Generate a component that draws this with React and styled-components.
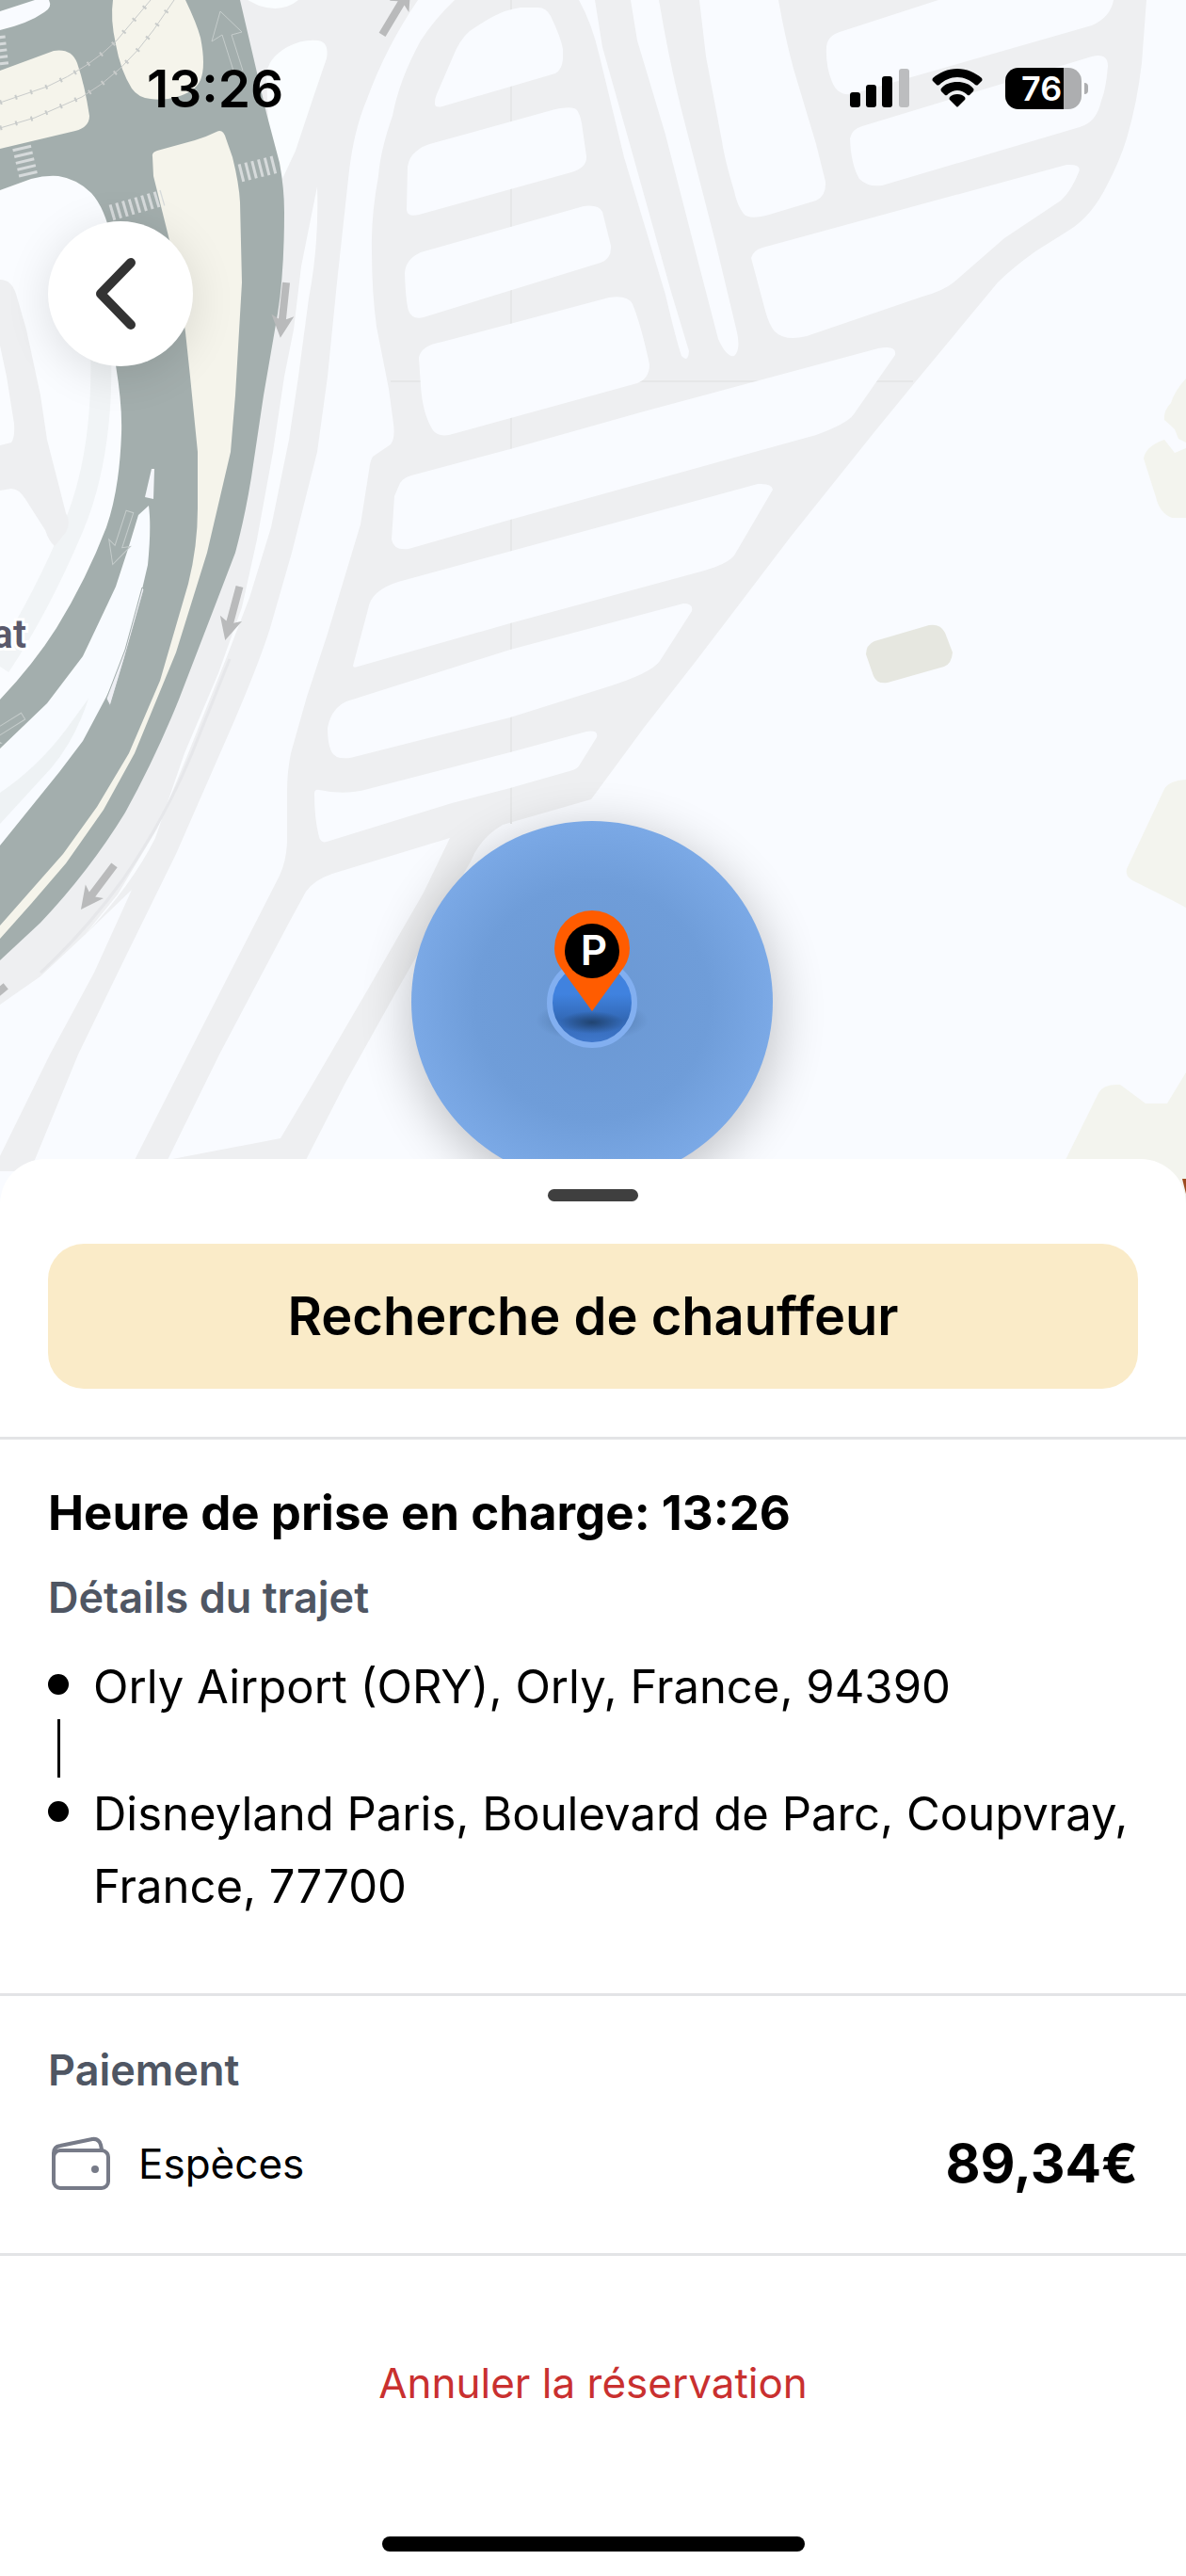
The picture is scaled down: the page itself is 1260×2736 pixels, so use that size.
import React from 'react'
import styled, { createGlobalStyle } from 'styled-components'

const GlobalStyle = createGlobalStyle`
  *, *::before, *::after {
    box-sizing: border-box;
  }

  body {
    margin: 0;
    background: #ffffff;
    color: #000000;
    font-family: Inter, Roboto, 'Liberation Sans', sans-serif;
  }
`

const Screen = styled.main`
  position: relative;
  display: flex;
  flex-direction: column;
  min-height: 100vh;
`

const MapView = styled.svg`
  display: block;
  width: 100%;
  height: auto;
  background: #f9fbff;
`

const Overlay = styled.header`
  position: absolute;
  top: 0;
  left: 0;
  right: 0;
`

const StatusBar = styled.div`
  display: flex;
  align-items: center;
  justify-content: space-between;
  height: 188px;
  padding: 0 104px 0 156px;
`

const Clock = styled.time`
  font-size: 55px;
  font-weight: 600;
  line-height: 64px;
`

const StatusIcons = styled.div`
  display: flex;
  align-items: center;
  gap: 24px;
`

const Battery = styled.div`
  display: flex;
  align-items: center;
  gap: 3px;
`

const BatteryLevel = styled.span`
  width: 81px;
  height: 44px;
  padding-left: 17px;
  border-radius: 14px;
  background: linear-gradient(to right, #000000 76%, #adaeb0 76%);
  color: #ffffff;
  font-size: 36px;
  font-weight: 600;
  line-height: 44px;
`

const BatteryTip = styled.span`
  width: 4px;
  height: 12px;
  border-radius: 0 4px 4px 0;
  background: #adaeb0;
`

const BackButton = styled.button`
  display: flex;
  align-items: center;
  justify-content: center;
  width: 154px;
  height: 154px;
  margin: 47px 0 0 51px;
  padding: 0;
  border: 0;
  border-radius: 50%;
  background: #ffffff;
  box-shadow: 0 8px 48px rgba(0, 0, 0, 0.12);
  cursor: pointer;
`

const Sheet = styled.section`
  position: relative;
  display: flex;
  flex: 1;
  flex-direction: column;
  margin-top: -48px;
  border-radius: 48px 48px 0 0;
  background: #ffffff;
`

const Handle = styled.span`
  align-self: center;
  width: 96px;
  height: 13px;
  margin: 32px 0 45px;
  border-radius: 8px;
  background: #3f3f3f;
`

const Block = styled.div`
  display: flex;
  flex-direction: column;
  padding: ${(props) => props.$padding};
  border-bottom: 3px solid #e3e4e6;
`

const SearchStatus = styled.p`
  margin: 0;
  padding: 44px;
  border-radius: 38px;
  background: #faebc8;
  font-size: 56px;
  font-weight: 600;
  line-height: 66px;
  text-align: center;
`

const Title = styled.h1`
  margin: 0 0 30px;
  font-size: 51px;
  font-weight: 700;
  line-height: 64px;
`

const Label = styled.h2`
  margin: 0;
  color: #4f5663;
  font-size: 45px;
  font-weight: 600;
  line-height: 56px;
`

const Stops = styled.ul`
  display: flex;
  flex-direction: column;
  margin: 28px 0 0;
  padding: 0;
  list-style: none;
`

const Stop = styled.li`
  display: grid;
  grid-template-columns: 22px 1fr;
  column-gap: 26px;
`

const StopMark = styled.span`
  display: flex;
  flex-direction: column;
  align-items: center;
  gap: 26px;
  padding-top: 25px;

  &::before {
    width: 22px;
    height: 22px;
    border-radius: 50%;
    background: #000000;
    content: '';
  }
`

const StopLine = styled.span`
  width: 3px;
  height: 62px;
  background: #000000;
`

const Address = styled.span`
  font-size: 49px;
  line-height: 77px;
`

const PaymentRow = styled.div`
  display: flex;
  align-items: center;
  gap: 28px;
  margin-top: 36px;
`

const Method = styled.span`
  flex: 1;
  font-size: 44px;
  line-height: 70px;
`

const Price = styled.strong`
  font-size: 57px;
  font-weight: 700;
  line-height: 70px;
`

const CancelButton = styled.button`
  align-self: center;
  margin: 105px 0 0;
  padding: 0;
  border: 0;
  background: none;
  color: #c9302f;
  font-family: inherit;
  font-size: 44px;
  line-height: 60px;
  cursor: pointer;
`

const HomeIndicator = styled.span`
  align-self: center;
  width: 449px;
  height: 16px;
  margin: auto 0 26px;
  border-radius: 8px;
  background: #000000;
`

// Lanes between the parking rows; the rows are drawn over it.
const parkingOutline =
  'M483 0Q462 20 447 43Q424 85 417 123Q404 160 402 187Q394 230 395 267Q395 310 400 347L413 413L418 450Q420 466 415 472L396 485Q393 490 392 500L383 557L348 673L326 740L309 800Q305 820 305 840V895Q304 915 297 930L200 1120L143 1232H178L298 1209L333 1150L393 1047L420 1000L450 948L478 890L353 928Q333 935 325 947L307 980L233 1120L178 1232H325L367 1150L420 1055L500 915Q510 890 534 876L628 849L684 773L741 700L840 570L928 460L973 405L1060 300Q1075 285 1100 267L1135 245Q1160 230 1177 195Q1190 170 1197 147Q1208 110 1213 67L1218 0Z'

const parkingRows = [
  'M462 110Q462 104 464 100L480 63Q488 42 499 33Q512 24 523 18Q538 10 553 8H572Q580 8 585 17Q596 40 598 52V63Q597 74 590 78L470 113Q462 115 462 110Z',
  'M432 223L433 177Q435 166 442 161Q448 155 460 152L590 116Q609 112 613 117Q616 121 618 131L623 166Q624 178 607 183L445 228Q433 231 432 223Z',
  'M430 290Q431 275 447 268L620 219Q636 217 640 225L649 261Q650 275 638 279L450 337Q438 340 434 330Q431 320 430 290Z',
  'M445 380Q447 367 470 363L647 316Q667 313 672 323Q681 345 690 387Q690 402 677 407L477 462Q465 464 460 457Q449 440 447 410Z',
  'M615 0H632L640 50L673 167L713 310L732 373Q731 386 724 378Q718 360 707 313L663 167L637 60Q629 25 615 0Z',
  'M670 0H700Q710 60 723 113L760 257L783 353Q787 372 780 378Q772 380 763 360L743 283L707 143L677 43Z',
  'M743 0H827Q834 40 843 73L867 153L877 193Q878 208 867 213L817 228Q796 234 790 227Q783 218 780 203Q770 170 767 150L750 60Z',
  'M997 0H1183Q1180 18 1160 27L905 100Q890 102 884 87Q877 70 878 50Q879 38 892 34Z',
  'M903 147Q905 137 916 134L1160 60Q1177 56 1177 70Q1175 95 1170 107Q1165 130 1147 135L937 197Q922 199 913 190Q904 175 903 147Z',
  'M798 274Q800 266 810 263L1133 175Q1150 174 1146 183Q1138 203 1127 213L1067 253L1013 300Q1002 309 980 315L857 357Q834 363 823 352Q817 345 813 330Z',
  'M425 513Q429 507 437 505L542 477L684 437L933 370Q953 366 951 377L930 407L907 440Q900 450 867 462L542 552L434 583Q418 585 416 573L419 527Z',
  'M375 707L391 647Q394 627 423 618L805 514Q820 513 821 520L780 590Q772 600 741 608L542 662L380 708Q375 710 375 707Z',
  'M348 773Q352 752 368 745L542 690L726 641Q737 641 735 649L701 702Q692 715 644 730L542 762L372 805Q356 807 352 798Q348 790 348 773Z',
  'M334 843Q334 838 339 839Q366 845 391 838L542 799L623 777Q636 775 634 783L616 812Q614 817 605 819L542 837L480 853L347 894Q341 896 339 889Q334 870 334 843Z',
]

const greenery = [
  'M1260 402Q1248 415 1244 428Q1236 436 1237 446Q1242 450 1248 456L1252 466L1260 470Z',
  'M1215 487Q1217 474 1237 467L1248 481L1260 476V550H1245Q1232 545 1228 528Z',
  'M1197 923L1237 838Q1242 829 1260 828V964L1245 956L1203 935Q1195 930 1197 923Z',
  'M1130 1236L1167 1161Q1172 1151 1190 1152L1217 1172H1240L1260 1139V1279H1130Z',
]

const DirectionArrow = ({ x, y, angle, outline }) => (
  <path
    d="M-4 -29H4V10L12 6L0 30L-12 6L-4 10Z"
    transform={`translate(${x} ${y}) rotate(${angle})`}
    fill={outline ? 'none' : '#b9babb'}
    stroke={outline ? '#c5cccb' : 'none'}
    strokeWidth="1"
  />
)

const Crossing = ({ d, width }) => (
  <path d={d} fill="none" stroke="#d6dadb" strokeWidth={width} strokeDasharray="3 4" />
)

const Track = ({ d }) => (
  <g fill="none" stroke="#c8cbca">
    <path d={d} strokeWidth="1" />
    <path d={d} strokeWidth="5" strokeDasharray="2 15" />
  </g>
)

const PickupMap = () => (
  <MapView viewBox="0 0 1260 1279" role="img" aria-label="Plan du point de prise en charge">
    <defs>
      <radialGradient id="zone">
        <stop offset="0" stopColor="#6b98d3" />
        <stop offset="0.65" stopColor="#6f9dd9" />
        <stop offset="1" stopColor="#7ba9e6" />
      </radialGradient>
      <linearGradient id="dot" x1="0" y1="0" x2="0" y2="1">
        <stop offset="0.4" stopColor="#4082df" />
        <stop offset="0.7" stopColor="#3268b5" />
        <stop offset="1" stopColor="#4179ce" />
      </linearGradient>
      <radialGradient id="pinShadow">
        <stop offset="0" stopColor="#1c3a5f" stopOpacity="0.8" />
        <stop offset="1" stopColor="#1c3a5f" stopOpacity="0" />
      </radialGradient>
      <filter id="soft" x="-30%" y="-30%" width="160%" height="160%">
        <feGaussianBlur stdDeviation="26" />
      </filter>
    </defs>

    <rect width="1260" height="1279" fill="#f9fbff" />

    {/* service road on the right of the ramps */}
    <path
      d="M250 0H444Q410 50 390 105Q375 140 370 190L358 300L348 400L337 480L310 587L287 667Q275 705 247 770L187 907L133 1017L83 1120L32 1244H-8L53 1120L100 1033L140 945L90 993L43 1037L0 1067V960Z"
      fill="#eeeff1"
    />
    <path
      d="M263 0H317Q300 14 275 6ZM283 80Q284 62 305 50Q322 41 338 43Q350 45 347 62L334 100L314 160L300 190L285 130Z"
      fill="#fafdff"
    />
    <path
      d="M337 198Q339 260 328 317L317 400L307 467L288 560L265 635L240 700L200 800L167 880L125 950L90 993Q140 940 165 890L196 800L232 715L257 645L273 573L290 480L302 400L312 350L320 283Z"
      fill="#fafcff"
    />
    <path d="M244 700L204 800Q175 870 130 935Q90 990 43 1033" fill="none" stroke="#e6e7ea" strokeWidth="3" />

    <path d={parkingOutline} fill="#eeeff1" fillRule="evenodd" />
    <g stroke="#e6e7e8" strokeWidth="2">
      <path d="M543 0V875" />
      <path d="M415 405H970" />
    </g>
    {parkingRows.map((d) => (
      <path key={d} d={d} fill="#f9fbff" />
    ))}

    {/* airport ramps */}
    <path
      d="M0 0H255L283 120L297 173Q302 200 302 225Q302 290 295 333L280 420L267 507Q260 550 250 587L227 647L190 743Q165 805 133 863Q95 925 43 980L0 1020Z"
      fill="#a3aead"
    />
    <path d="M0 12L37 0H52Q56 8 47 13Q30 25 0 32Z" fill="#f9fbff" />
    <path
      d="M0 202L33 190Q48 186 62 187Q82 190 97 205Q120 230 124 300L123 388Q130 430 129 460Q127 520 113 560Q92 615 60 667Q36 705 0 743Z"
      fill="#fafcff"
    />
    <path d="M102 300Q120 460 78 560Q42 645 0 708" fill="none" stroke="#f1f4f6" strokeWidth="22" />
    <path
      d="M0 297Q12 297 17 312L28 350L43 420L50 467L70 545Q76 555 70 565L58 580Q52 575 48 563L27 530Q20 519 12 519L0 521V473L12 470Q16 465 15 450L7 400L0 367Z"
      fill="#eeeff1"
    />
    <path
      d="M158 537Q161 560 157 600L143 660L127 713L113 740L88 787L63 820L0 898V795L50 747L88 697Q108 655 123 623L137 580L147 547Z"
      fill="#f8fbff"
    />
    <path d="M0 842Q40 815 70 775L94 742Q80 785 55 815L0 875Z" fill="#eef2f4" />
    <path d="M151 624L153 626L132 700L117 750L113 742L133 690Z" fill="#eeeff4" stroke="#a3aead" strokeWidth="1" />
    <path d="M161 498H164L163 530L154 528Z" fill="#f4f6fa" />

    <g fill="#f5f4eb">
      <path d="M120 0Q117 20 123 47Q128 75 140 94Q147 104 160 105Q175 107 187 103Q207 98 213 85Q219 70 213 40Q209 25 197 0Z" />
      <path d="M0 75L57 54Q76 51 82 67Q90 90 95 123Q95 135 80 139L0 158Z" />
      <path d="M162 166Q161 162 167 160L207 149Q220 145 230 140Q237 136 240 147L247 167Q254 195 255 215L257 300L250 420L245 480L220 587L187 693L143 800L110 860L70 917L33 960L0 997V983L67 907L103 857L137 800L170 723L200 620Q210 580 210 540V480L202 400L197 353L187 283L163 187Z" />
    </g>

    <Track d="M0 109L50 92Q95 72 124 43L160 0" />
    <Track d="M0 136L37 125L87 103Q130 78 163 32L185 0" />
    <Crossing d="M118 226L173 210" width="17" />
    <Crossing d="M255 184L295 174" width="19" />
    <Crossing d="M23 156L31 190" width="20" />
    <Crossing d="M1 38L5 72" width="9" />

    <path d="M234 12L257 34L246 37L258 75M234 12L225 44L236 37L248 75" fill="none" stroke="#c5cccb" strokeWidth="1" />
    <DirectionArrow x={301} y={329} angle={6} />
    <DirectionArrow x={247} y={651} angle={15} />
    <DirectionArrow x={104} y={942} angle={37} />
    <DirectionArrow x={-16} y={1066} angle={50} />
    <DirectionArrow x={421} y={12} angle={211} />
    <DirectionArrow x={129} y={571} angle={18} outline />
    <DirectionArrow x={0} y={776} angle={58} outline />

    <text
      x="28"
      y="688"
      textAnchor="end"
      fontFamily="Roboto, sans-serif"
      fontSize="42"
      fontWeight="600"
      fill="#5a596b"
      stroke="#ffffff"
      strokeWidth="6"
      paintOrder="stroke"
    >
      at
    </text>

    {greenery.map((d) => (
      <path key={d} d={d} fill="#f3f4ee" />
    ))}
    <path d="M920 695Q920 685 929 681L987 664Q999 662 1004 672L1012 693Q1011 705 1003 708L943 725Q932 727 928 718Z" fill="#e6e7e0" />
    <path d="M1256 1252H1260V1268Z" fill="#9c4a1e" />

    {/* pickup zone */}
    <circle cx="630" cy="1076" r="196" fill="#000000" opacity="0.22" filter="url(#soft)" />
    <circle cx="629" cy="1064" r="192" fill="url(#zone)" />
    <ellipse cx="629" cy="1084" rx="60" ry="22" fill="url(#pinShadow)" opacity="0.6" />
    <circle cx="629" cy="1065" r="45" fill="url(#dot)" stroke="#82aff0" strokeWidth="6" />
    <ellipse cx="629" cy="1086" rx="34" ry="12" fill="url(#pinShadow)" />
    <path d="M629 1074L595 1027Q589 1018 589 1007A40 40 0 0 1 669 1007Q669 1018 663 1027Z" fill="#ff5c00" />
    <circle cx="629" cy="1010" r="29" fill="#000000" />
    <text
      x="631"
      y="1025"
      textAnchor="middle"
      fontFamily="Inter, sans-serif"
      fontSize="44"
      fontWeight="600"
      fill="#ffffff"
    >
      P
    </text>
  </MapView>
)

const SignalIcon = () => (
  <svg width="63" height="42" viewBox="0 0 63 42" role="img" aria-label="Réseau mobile">
    <rect x="0" y="25" width="11" height="16" rx="3" />
    <rect x="17" y="17" width="11" height="24" rx="3" />
    <rect x="34" y="8" width="11" height="33" rx="3" />
    <rect x="52" y="0" width="11" height="41" rx="3" fill="#bcbdbf" />
  </svg>
)

const WifiIcon = () => (
  <svg width="54" height="42" viewBox="0 0 54 42" role="img" aria-label="Wi-Fi">
    <path d="M27 0C37 0 46 4 53 10Q54 12 53 13L49 17Q48 18 46 17C41 12 34 9 27 9S13 12 8 17Q6 18 5 17L1 13Q0 12 1 10C8 4 17 0 27 0Z" />
    <path d="M27 14C34 14 40 16 44 21Q45 22 44 24L40 28Q38 29 37 27Q32 23 27 23T17 27Q16 29 14 28L10 24Q9 22 10 21C14 16 20 14 27 14Z" />
    <path d="M27 27Q32 27 35 30Q36 32 35 33L28 40Q27 41 26 40L19 33Q18 32 19 30Q22 27 27 27Z" />
  </svg>
)

const ChevronIcon = () => (
  <svg width="52" height="76" viewBox="0 0 52 76" fill="none" aria-hidden="true">
    <path d="M37 5L5 38L37 71" stroke="#333333" strokeWidth="10" strokeLinecap="round" strokeLinejoin="round" />
  </svg>
)

const WalletIcon = () => (
  <svg width="68" height="58" viewBox="0 0 68 58" fill="none" aria-hidden="true">
    <g stroke="#777b88" strokeWidth="4" strokeLinecap="round" strokeLinejoin="round">
      <rect x="6" y="15" width="58" height="40" rx="7" />
      <path d="M6 23V18Q6 11 13 10L47 3Q54 2 56 9L57 14" />
    </g>
    <circle cx="50" cy="35" r="4" fill="#777b88" />
  </svg>
)

const App = () => (
  <Screen>
    <GlobalStyle />
    <PickupMap />
    <Overlay>
      <StatusBar>
        <Clock>13:26</Clock>
        <StatusIcons>
          <SignalIcon />
          <WifiIcon />
          <Battery>
            <BatteryLevel>76</BatteryLevel>
            <BatteryTip />
          </Battery>
        </StatusIcons>
      </StatusBar>
      <BackButton type="button" aria-label="Retour">
        <ChevronIcon />
      </BackButton>
    </Overlay>
    <Sheet>
      <Handle />
      <Block $padding="0 51px 51px">
        <SearchStatus role="status">Recherche de chauffeur</SearchStatus>
      </Block>
      <Block $padding="46px 51px 75px">
        <Title>Heure de prise en charge: 13:26</Title>
        <Label>Détails du trajet</Label>
        <Stops>
          <Stop>
            <StopMark>
              <StopLine />
            </StopMark>
            <Address>Orly Airport (ORY), Orly, France, 94390</Address>
          </Stop>
          <Stop>
            <StopMark />
            <Address>Disneyland Paris, Boulevard de Parc, Coupvray, France, 77700</Address>
          </Stop>
        </Stops>
      </Block>
      <Block $padding="51px 51px 60px">
        <Label>Paiement</Label>
        <PaymentRow>
          <WalletIcon />
          <Method>Espèces</Method>
          <Price>89,34€</Price>
        </PaymentRow>
      </Block>
      <CancelButton type="button">Annuler la réservation</CancelButton>
      <HomeIndicator />
    </Sheet>
  </Screen>
)

export default App
